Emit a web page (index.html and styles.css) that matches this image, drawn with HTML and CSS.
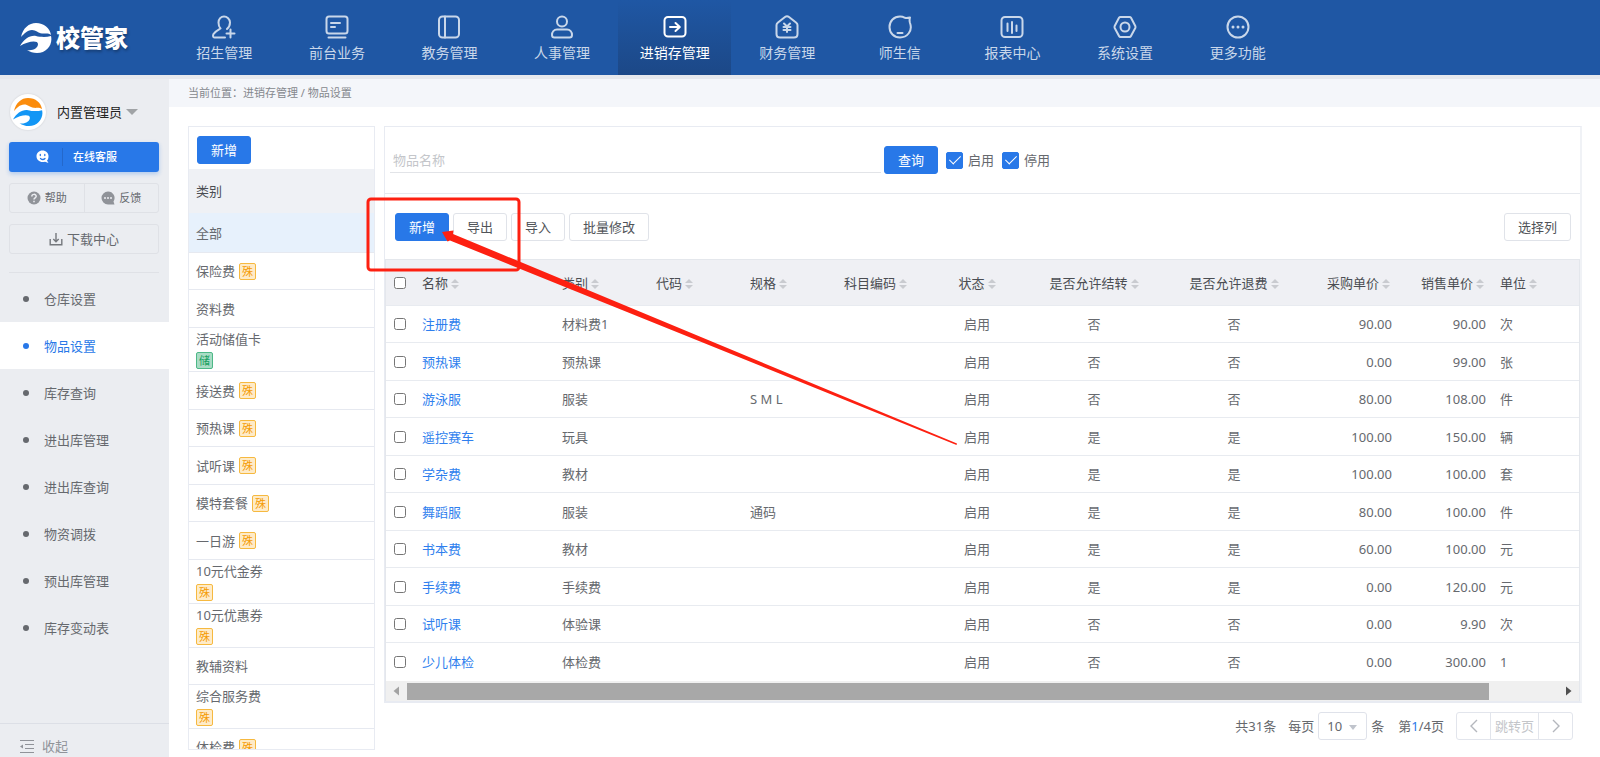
FILE: index.html
```html
<!DOCTYPE html>
<html lang="zh-CN">
<head>
    <meta charset="UTF-8">
    <meta name="viewport" content="width=device-width, initial-scale=1.0">
    <title>校管家 - 物品设置</title>
    <link rel="stylesheet" href="styles.css">
</head>
<body>
    <!-- shared icons -->
    <svg class="sprite" aria-hidden="true">
        <symbol id="swoosh" viewBox="0 0 32 32">
            <path fill="currentColor" d="M1 15C3 6 9 1 16 1C24 1 30 6 31 13C28 10.500 25 12 22 11.500C18 11 16 8 12 8C7 8 4 12 1 15Z"/>
            <path d="M0 24C4 17 10 13 16 14C20 15 26 15.500 31 14C33 22 27 31 17 31C13 31 10 30 7 28C13 29 18 26 18 22C18 18 8 19 0 24Z"/>
        </symbol>
        <symbol id="sort" viewBox="0 0 8 12">
            <path d="M4 1L8 5H0ZM4 11L8 7H0Z"/>
        </symbol>
    </svg>

    <header class="topbar">
        <a class="logo" href="#">
            <svg width="32" height="32"><use href="#swoosh"/></svg>
            <span>校管家</span>
        </a>
        <nav class="nav">
            <a href="#">
                <svg viewBox="0 0 24 24"><path d="M13 22.500H2.500C.8 22.500 .8 20.500 1.500 19C3 16.500 6 15 8.500 13.500C7 12 6.500 10 6.500 7.500C6.500 4 9 1.500 12 1.500S18 4 18 7.500C18 10 17.200 12 15 14M18.500 14.500V22.500M14.500 18.500H22.500"/></svg>
                <span>招生管理</span>
            </a>
            <a href="#">
                <svg viewBox="0 0 24 24"><rect x="1.500" y="1.500" width="21" height="17" rx="2.500"/><path d="M6 8H15M6 12H10M3.500 22.500H20.500"/></svg>
                <span>前台业务</span>
            </a>
            <a href="#">
                <svg viewBox="0 0 24 24"><rect x="2" y="1.500" width="20" height="21" rx="3.500"/><path d="M8 1.500V22.500"/></svg>
                <span>教务管理</span>
            </a>
            <a href="#">
                <svg viewBox="0 0 24 24"><circle cx="12" cy="6.500" r="5"/><path d="M7 14.500H17C20 14.500 22 17 22 20C22 21.500 21 22.500 19.500 22.500H4.500C3 22.500 2 21.500 2 20C2 17 4 14.500 7 14.500Z"/></svg>
                <span>人事管理</span>
            </a>
            <a class="active" href="#">
                <svg viewBox="0 0 24 24"><rect x="1.500" y="2" width="21" height="19.500" rx="3.500"/><path d="M7 12H16"/><path d="M12.500 8L16.800 12L12.500 16"/></svg>
                <span>进销存管理</span>
            </a>
            <a href="#">
                <svg viewBox="0 0 24 24"><path d="M10 2C11.300 1 12.700 1 14 2L21 7.500C22 8.300 22.500 9 22.500 10V19C22.500 21 21 22.500 19 22.500H5C3 22.500 1.500 21 1.500 19V10C1.500 9 2 8.300 3 7.500Z"/><path d="M9 8.500L12 11.500L15 8.500M8.500 12H15.500M8.500 15H15.500M12 11.500V17"/></svg>
                <span>财务管理</span>
            </a>
            <a href="#">
                <svg viewBox="0 0 24 24"><path d="M22 2.500C21.300 5 21.500 6.500 22 8C25 16 19 22.500 12 22.500C6 22.500 1.500 18 1.500 12S6 1.500 12 1.500C14 1.500 15.500 2 17 2.800C18.500 3.300 20 3 22 2.500Z"/><path d="M9.500 18H14.500"/></svg>
                <span>师生信</span>
            </a>
            <a href="#">
                <svg viewBox="0 0 24 24"><rect x="1.500" y="2" width="21" height="20" rx="3.500"/><path d="M7.500 8.500V16M12 7V18M16.500 10.500V16"/></svg>
                <span>报表中心</span>
            </a>
            <a href="#">
                <svg viewBox="0 0 24 24"><path d="M7.500 2H16.500C17.300 2 17.700 2.300 18 2.800L22.300 11C22.600 11.700 22.600 12.300 22.300 13L18 21C17.700 21.600 17.300 22 16.500 22H7.500C6.700 22 6.300 21.600 6 21L1.700 13C1.400 12.300 1.400 11.700 1.700 11L6 2.800C6.300 2.300 6.700 2 7.500 2Z"/><circle cx="12" cy="12" r="4.500"/></svg>
                <span>系统设置</span>
            </a>
            <a href="#">
                <svg viewBox="0 0 24 24"><circle cx="12" cy="12" r="10.500"/><path class="dots" d="M7 12H7.010M12 12H12.010M17 12H17.010"/></svg>
                <span>更多功能</span>
            </a>
        </nav>
    </header>

    <div class="page">
        <aside class="sidebar">
            <div class="user">
                <span class="avatar"><svg width="30" height="30"><use href="#swoosh"/></svg></span>
                <span>内置管理员</span>
                <svg class="caret" width="12" height="6" viewBox="0 0 12 6"><path d="M0 0H12L6 6Z"/></svg>
            </div>
            <button class="service">
                <svg width="14" height="14" viewBox="0 0 14 14"><path fill="#fff" d="M6.500 .5C10 .5 12.500 3 12.500 6C12.500 8 12 9.500 11 10.500L12.500 13L9 11.800C4 13 .5 10 .5 6.300C.5 3 3 .5 6.500 .5Z"/><path fill="none" stroke="#2878e8" stroke-width="1.300" stroke-linecap="round" d="M4.300 4.500V5.500M8.800 4.500V5.500M4.500 8.500C6 9.800 8 9.500 9 8.500"/></svg>
                <span>在线客服</span>
            </button>
            <div class="help-row">
                <button>
                    <svg width="14" height="14" viewBox="0 0 14 14"><circle cx="7" cy="7" r="6.500" fill="#909399"/><path fill="none" stroke="#ebedf1" stroke-width="1.500" d="M4.800 5.500C4.800 2.700 9.200 2.700 9.200 5.300C9.200 6.800 7 6.800 7 8.500M7 9.700V11.200"/></svg>
                    帮助
                </button>
                <button>
                    <svg width="14" height="14" viewBox="0 0 14 14"><path fill="#909399" d="M7 .5A6.500 6.500 0 0 1 12.500 10.500L13.500 13.500H7A6.500 6.500 0 0 1 7 .5Z"/><path stroke="#ebedf1" stroke-width="1.500" d="M3 7H5M6 7H8M9 7H11"/></svg>
                    反馈
                </button>
            </div>
            <button class="download">
                <svg width="14" height="14" viewBox="0 0 14 14"><path fill="none" stroke="#75787d" stroke-width="1.400" d="M1.200 7V12.800H12.800V7M7 1V9.500M4.300 7L7 9.700L9.700 7"/></svg>
                下载中心
            </button>
            <ul class="menu">
                <li><a href="#">仓库设置</a></li>
                <li><a class="active" href="#">物品设置</a></li>
                <li><a href="#">库存查询</a></li>
                <li><a href="#">进出库管理</a></li>
                <li><a href="#">进出库查询</a></li>
                <li><a href="#">物资调拨</a></li>
                <li><a href="#">预出库管理</a></li>
                <li><a href="#">库存变动表</a></li>
            </ul>
            <button class="collapse">
                <svg width="14" height="14" viewBox="0 0 14 14"><path fill="none" stroke="#909399" d="M0 1.500H14M5 5.500H14M5 9.500H14M0 13.500H14"/><path fill="#909399" d="M0 7.500L3 5.500V9.500Z"/></svg>
                收起
            </button>
        </aside>

        <main class="content">
            <div class="breadcrumb">当前位置：进销存管理 / 物品设置</div>
            <div class="columns">
                <section class="category">
                    <div class="category-tools"><button class="btn primary">新增</button></div>
                    <h2>类别</h2>
                    <ul>
                        <li class="all">全部</li>
                        <li>保险费<span class="badge">殊</span></li>
                        <li>资料费</li>
                        <li class="stacked">活动储值卡<span class="badge green">储</span></li>
                        <li>接送费<span class="badge">殊</span></li>
                        <li>预热课<span class="badge">殊</span></li>
                        <li>试听课<span class="badge">殊</span></li>
                        <li>模特套餐<span class="badge">殊</span></li>
                        <li>一日游<span class="badge">殊</span></li>
                        <li class="stacked">10元代金券<span class="badge">殊</span></li>
                        <li class="stacked">10元优惠券<span class="badge">殊</span></li>
                        <li>教辅资料</li>
                        <li class="stacked">综合服务费<span class="badge">殊</span></li>
                        <li>体检费<span class="badge">殊</span></li>
                    </ul>
                </section>

                <section class="goods">
                    <div class="panel">
                        <form class="search">
                            <input class="keyword" type="text" placeholder="物品名称" aria-label="物品名称">
                            <button type="button" class="btn primary">查询</button>
                            <label><input type="checkbox" checked>启用</label>
                            <label><input type="checkbox" checked>停用</label>
                        </form>
                        <div class="toolbar">
                            <button class="btn primary">新增</button>
                            <button class="btn">导出</button>
                            <button class="btn">导入</button>
                            <button class="btn">批量修改</button>
                            <button class="btn pick">选择列</button>
                        </div>
                        <div class="table-box">
                            <table>
                                <colgroup>
                                    <col class="w-check"><col class="w-wide"><col class="w-base"><col class="w-base"><col class="w-base"><col class="w-base"><col class="w-base"><col class="w-wide"><col class="w-wide"><col class="w-base"><col class="w-base"><col>
                                </colgroup>
                                <thead>
                                    <tr>
                                        <th><input type="checkbox" aria-label="全选"></th>
                                        <th>名称<svg class="sort"><use href="#sort"/></svg></th>
                                        <th>类别<svg class="sort"><use href="#sort"/></svg></th>
                                        <th>代码<svg class="sort"><use href="#sort"/></svg></th>
                                        <th>规格<svg class="sort"><use href="#sort"/></svg></th>
                                        <th>科目编码<svg class="sort"><use href="#sort"/></svg></th>
                                        <th class="center">状态<svg class="sort"><use href="#sort"/></svg></th>
                                        <th class="center">是否允许结转<svg class="sort"><use href="#sort"/></svg></th>
                                        <th class="center">是否允许退费<svg class="sort"><use href="#sort"/></svg></th>
                                        <th class="num">采购单价<svg class="sort"><use href="#sort"/></svg></th>
                                        <th class="num">销售单价<svg class="sort"><use href="#sort"/></svg></th>
                                        <th>单位<svg class="sort"><use href="#sort"/></svg></th>
                                    </tr>
                                </thead>
                                <tbody>
                                    <tr><td><input type="checkbox" aria-label="注册费"></td><td><a href="#">注册费</a></td><td>材料费1</td><td></td><td></td><td></td><td class="center">启用</td><td class="center">否</td><td class="center">否</td><td class="num">90.00</td><td class="num">90.00</td><td>次</td></tr>
                                    <tr><td><input type="checkbox" aria-label="预热课"></td><td><a href="#">预热课</a></td><td>预热课</td><td></td><td></td><td></td><td class="center">启用</td><td class="center">否</td><td class="center">否</td><td class="num">0.00</td><td class="num">99.00</td><td>张</td></tr>
                                    <tr><td><input type="checkbox" aria-label="游泳服"></td><td><a href="#">游泳服</a></td><td>服装</td><td></td><td>S M L</td><td></td><td class="center">启用</td><td class="center">否</td><td class="center">否</td><td class="num">80.00</td><td class="num">108.00</td><td>件</td></tr>
                                    <tr><td><input type="checkbox" aria-label="遥控赛车"></td><td><a href="#">遥控赛车</a></td><td>玩具</td><td></td><td></td><td></td><td class="center">启用</td><td class="center">是</td><td class="center">是</td><td class="num">100.00</td><td class="num">150.00</td><td>辆</td></tr>
                                    <tr><td><input type="checkbox" aria-label="学杂费"></td><td><a href="#">学杂费</a></td><td>教材</td><td></td><td></td><td></td><td class="center">启用</td><td class="center">是</td><td class="center">是</td><td class="num">100.00</td><td class="num">100.00</td><td>套</td></tr>
                                    <tr><td><input type="checkbox" aria-label="舞蹈服"></td><td><a href="#">舞蹈服</a></td><td>服装</td><td></td><td>通码</td><td></td><td class="center">启用</td><td class="center">是</td><td class="center">是</td><td class="num">80.00</td><td class="num">100.00</td><td>件</td></tr>
                                    <tr><td><input type="checkbox" aria-label="书本费"></td><td><a href="#">书本费</a></td><td>教材</td><td></td><td></td><td></td><td class="center">启用</td><td class="center">是</td><td class="center">是</td><td class="num">60.00</td><td class="num">100.00</td><td>元</td></tr>
                                    <tr><td><input type="checkbox" aria-label="手续费"></td><td><a href="#">手续费</a></td><td>手续费</td><td></td><td></td><td></td><td class="center">启用</td><td class="center">是</td><td class="center">是</td><td class="num">0.00</td><td class="num">120.00</td><td>元</td></tr>
                                    <tr><td><input type="checkbox" aria-label="试听课"></td><td><a href="#">试听课</a></td><td>体验课</td><td></td><td></td><td></td><td class="center">启用</td><td class="center">否</td><td class="center">否</td><td class="num">0.00</td><td class="num">9.90</td><td>次</td></tr>
                                    <tr><td><input type="checkbox" aria-label="少儿体检"></td><td><a href="#">少儿体检</a></td><td>体检费</td><td></td><td></td><td></td><td class="center">启用</td><td class="center">否</td><td class="center">否</td><td class="num">0.00</td><td class="num">300.00</td><td>1</td></tr>
                                </tbody>
                            </table>
                            <div class="scrollbar">
                                <svg width="21" height="20" viewBox="0 0 21 20"><path fill="#a3a3a3" d="M13 5.500V14.500L7.500 10Z"/></svg>
                                <div class="track"><div class="thumb"></div></div>
                                <svg width="21" height="20" viewBox="0 0 21 20"><path fill="#505050" d="M8 5.500V14.500L13.500 10Z"/></svg>
                            </div>
                        </div>
                    </div>
                    <div class="pager">
                        <span class="total">共31条</span>
                        <label for="pageSize">每页</label>
                        <span class="size">
                            <select id="pageSize"><option>10</option><option>20</option><option>50</option></select>
                            <svg width="8" height="5" viewBox="0 0 8 5"><path fill="#c0c4cc" d="M0 0H8L4 5Z"/></svg>
                        </span>
                        <span>条</span>
                        <span class="current">第<b>1</b>/4页</span>
                        <div class="jump">
                            <button aria-label="上一页"><svg width="10" height="14" viewBox="0 0 10 14"><path d="M8 1L2 7L8 13"/></svg></button>
                            <input type="text" placeholder="跳转页" aria-label="跳转页">
                            <button aria-label="下一页"><svg width="10" height="14" viewBox="0 0 10 14"><path d="M2 1L8 7L2 13"/></svg></button>
                        </div>
                    </div>
                </section>
            </div>
        </main>
    </div>

    <!-- guide marker over the add button -->
    <svg class="marker" width="600" height="260" viewBox="0 0 600 260" aria-hidden="true">
        <rect x="8" y="9" width="151" height="71" rx="3"/>
        <path d="M82 42L93.500 40.500L93 44L597 253.500L596.500 255L90 50.500L87.500 51.500Z"/>
    </svg>
</body>
</html>
```
FILE: styles.css
```css
* {
    box-sizing: border-box;
}
body {
    margin: 0;
    height: 100vh;
    display: flex;
    flex-direction: column;
    overflow: hidden;
    font-family: "Noto Sans", "Noto Sans CJK SC", sans-serif;
    font-size: 13px;
    line-height: 18px;
    color: #66696e;
    background: #fff;
}
a {
    color: inherit;
    text-decoration: none;
}
ul {
    list-style: none;
    margin: 0;
    padding: 0;
}
button, input, select {
    font: inherit;
    color: inherit;
    margin: 0;
}
button {
    cursor: pointer;
    padding: 0;
    background: none;
    border: none;
}
.sprite {
    display: none;
}

/* top bar */
.topbar {
    flex: none;
    height: 79px;
    display: flex;
    background: #1f57a4;
    border-bottom: 4px solid #e6e8ed;
}
.logo {
    width: 168px;
    padding-left: 20px;
    display: flex;
    align-items: center;
    gap: 4px;
    color: #fff;
    fill: #fff;
    font-size: 24px;
    font-weight: 900;
    line-height: 32px;
    text-shadow: 1px 2px 3px rgba(0, 0, 0, 0.3);
}
.nav {
    width: 1126px;
    display: flex;
}
.nav a {
    flex: 1;
    display: flex;
    flex-direction: column;
    align-items: center;
    padding-top: 15px;
    gap: 4px;
    font-size: 14px;
    line-height: 20px;
    color: #c9d7ea;
}
.nav svg {
    width: 24px;
    height: 24px;
    fill: none;
    stroke: currentColor;
    stroke-width: 2;
    stroke-linecap: round;
    stroke-linejoin: round;
}
.nav .dots {
    stroke-width: 3;
}
.nav .active {
    color: #fff;
    background: linear-gradient(#1f57a4, #1c4887);
}

/* sidebar */
.page {
    flex: 1;
    min-height: 0;
    display: flex;
}
.sidebar {
    width: 169px;
    flex: none;
    display: flex;
    flex-direction: column;
    background: #ebedf1;
}
.user {
    display: flex;
    align-items: center;
    margin: 15px 0 11px 10px;
    color: #222;
}
.avatar {
    width: 36px;
    height: 36px;
    margin-right: 11px;
    display: flex;
    align-items: center;
    justify-content: center;
    border-radius: 50%;
    background: #fff;
    box-shadow: 0 0 2px rgba(0, 0, 0, 0.15);
}
.avatar svg {
    fill: #1296f5;
    color: #fb8c0c;
}
.avatar + span {
    margin-right: 4px;
}
.caret {
    fill: #a0a3a6;
}
.service {
    height: 30px;
    margin: 1px 10px 11px 9px;
    display: flex;
    align-items: center;
    padding-left: 27px;
    border-radius: 3px;
    background: #2878e8;
    box-shadow: 0 2px 4px rgba(40, 120, 232, 0.3);
    color: #fff;
    font-size: 11px;
    font-weight: 500;
}
.service span {
    margin-left: 12px;
    padding-left: 10px;
    border-left: 1px solid #2468cb;
}
.help-row, .download {
    height: 30px;
    margin: 0 10px 11px 9px;
    border: 1px solid #dfe1e6;
    border-radius: 3px;
    display: flex;
}
.help-row button {
    flex: 1;
    display: flex;
    align-items: center;
    justify-content: center;
    gap: 4px;
    font-size: 11px;
}
.help-row button + button {
    border-left: 1px solid #dfe1e6;
}
.download {
    align-items: center;
    justify-content: center;
    gap: 4px;
    margin-bottom: 18px;
}
.menu {
    position: relative;
    flex: 1;
    padding-top: 3px;
}
.menu::before {
    content: "";
    position: absolute;
    top: 0;
    left: 9px;
    right: 10px;
    border-top: 1px solid #dfe1e6;
}
.menu a {
    height: 47px;
    display: flex;
    align-items: center;
    padding-left: 23px;
}
.menu a::before {
    content: "";
    width: 6px;
    height: 6px;
    margin-right: 15px;
    border-radius: 50%;
    background: currentColor;
}
.menu .active {
    background: #fff;
    color: #2878e8;
}
.collapse {
    height: 34px;
    flex: none;
    display: flex;
    align-items: center;
    gap: 8px;
    padding: 10px 0 0 20px;
    border-top: 1px solid #dcdfe6;
    color: #909399;
}

/* content */
.content {
    flex: 1;
    min-width: 0;
    display: flex;
    flex-direction: column;
}
.breadcrumb {
    height: 28px;
    flex: none;
    padding: 5px 19px;
    background: #f4f6fa;
    color: #85888e;
    font-size: 11px;
}
.columns {
    flex: 1;
    min-height: 0;
    display: flex;
    gap: 9px;
    padding: 19px 18px 7px 19px;
}
.btn {
    height: 28px;
    padding: 0 13px;
    border: 1px solid #e0e3e9;
    border-radius: 3px;
    background: #fff;
    color: #505358;
}
.btn.primary {
    background: #2878e8;
    border-color: #2878e8;
    color: #fff;
}

/* category list */
.category {
    width: 187px;
    flex: none;
    border: 1px solid #e8ebf2;
    overflow: hidden;
}
.category-tools {
    padding: 9px 8px 5px;
}
.category h2 {
    margin: 0;
    padding: 13px 7px;
    font-size: 13px;
    font-weight: 400;
    background: #eff1f5;
    color: #4a4d52;
}
.category li {
    height: 38px;
    display: flex;
    align-items: center;
    gap: 4px;
    padding: 0 7px;
    border-bottom: 1px solid #e6e9f0;
}
.category li:nth-child(even) {
    height: 37px;
}
.category li.all {
    height: 40px;
    background: #e7f1fc;
}
.category li.stacked {
    height: 44px;
    flex-direction: column;
    align-items: flex-start;
    padding-top: 2px;
}
.badge {
    width: 17px;
    height: 17px;
    border: 1px solid #f6b940;
    border-radius: 2px;
    background: #feebc8;
    color: #f59a00;
    font-size: 11px;
    line-height: 15px;
    text-align: center;
}
.badge.green {
    border-color: #4db887;
    background: #a9dcc5;
    color: #18a060;
}

/* goods panel */
.goods {
    flex: 1;
    min-width: 0;
}
.panel {
    border: 1px solid #e8ebf2;
    border-right: 2px solid #f0f2f6;
    border-bottom: 2px solid #e8ebf2;
}
.search {
    display: flex;
    align-items: center;
    height: 67px;
    padding: 0 5px;
    border-bottom: 1px solid #e6e9ee;
}
.keyword {
    width: 491px;
    height: 26px;
    margin-right: 3px;
    padding: 0 3px;
    border: none;
    border-bottom: 1px solid #e2e4e8;
    background: none;
}
.keyword::placeholder, .jump input::placeholder {
    color: #c4c6ca;
}
.search label {
    display: flex;
    align-items: center;
    gap: 5px;
    margin-left: 8px;
}
.search label input {
    appearance: none;
    width: 17px;
    height: 17px;
    display: flex;
    justify-content: center;
    border: 1px solid #2878e8;
    border-radius: 2px;
}
.search label input:checked {
    background: #2878e8;
}
.search label input:checked::before {
    content: "";
    width: 5px;
    height: 10px;
    border: solid #fff;
    border-width: 0 1px 1px 0;
    transform: rotate(45deg);
}
.toolbar {
    display: flex;
    gap: 4px;
    padding: 19px 9px 18px 10px;
}
.pick {
    margin-left: auto;
}
.table-box {
    border: 1px solid #e4e7ec;
    border-bottom: none;
}
table {
    width: 100%;
    table-layout: fixed;
    border-collapse: separate;
    border-spacing: 0;
}
.w-check {
    width: 28px;
}
.w-base {
    width: 94px;
}
.w-wide {
    width: 140px;
}
th, td {
    padding: 0 8px;
    text-align: left;
    font-weight: 400;
    white-space: nowrap;
    border-bottom: 1px solid #e8ebf0;
}
th {
    height: 46px;
    background: #eff0f4;
    color: #4a4d52;
}
td {
    height: 37px;
}
tr:nth-child(even) td {
    height: 38px;
}
tbody tr:last-child td {
    border-bottom: none;
}
td a {
    color: #2f7fee;
}
th input, td input {
    display: block;
    width: 12px;
    height: 12px;
}
.center {
    text-align: center;
}
.num {
    text-align: right;
}
td.num {
    padding-right: 6px;
}
.sort {
    width: 8px;
    height: 12px;
    margin-left: 3px;
    vertical-align: -2px;
    fill: #c9cbd0;
}
.scrollbar {
    height: 20px;
    display: flex;
    align-items: center;
    background: #f0f0f0;
}
.track {
    flex: 1;
}
.thumb {
    width: 94%;
    height: 17px;
    background: #a8a8a8;
}

/* pagination */
.pager {
    display: flex;
    align-items: center;
    justify-content: flex-end;
    gap: 4px;
    padding: 9px 9px 0 0;
}
.total, .current {
    margin-right: 8px;
}
.current {
    margin-left: 10px;
}
.current b {
    font-weight: 400;
    color: #2878e8;
}
.size {
    position: relative;
}
.size select {
    appearance: none;
    display: block;
    width: 49px;
    height: 28px;
    padding: 0 8px;
    border: 1px solid #dfe2ea;
    border-radius: 3px;
    background: #fff;
}
.size svg {
    position: absolute;
    right: 10px;
    top: 13px;
}
.jump {
    display: flex;
    height: 28px;
    border: 1px solid #e2e5ec;
    border-radius: 3px;
}
.jump button {
    width: 33px;
    display: flex;
    align-items: center;
    justify-content: center;
}
.jump svg {
    fill: none;
    stroke: #b4b7bd;
    stroke-width: 1.4;
}
.jump input {
    width: 49px;
    padding: 0;
    border: solid #e2e5ec;
    border-width: 0 1px;
    text-align: center;
}

/* guide marker */
.marker {
    position: absolute;
    left: 360px;
    top: 190px;
    pointer-events: none;
}
.marker rect {
    fill: none;
    stroke: #fd2011;
    stroke-width: 3;
}
.marker path {
    fill: #fd2011;
}
```
